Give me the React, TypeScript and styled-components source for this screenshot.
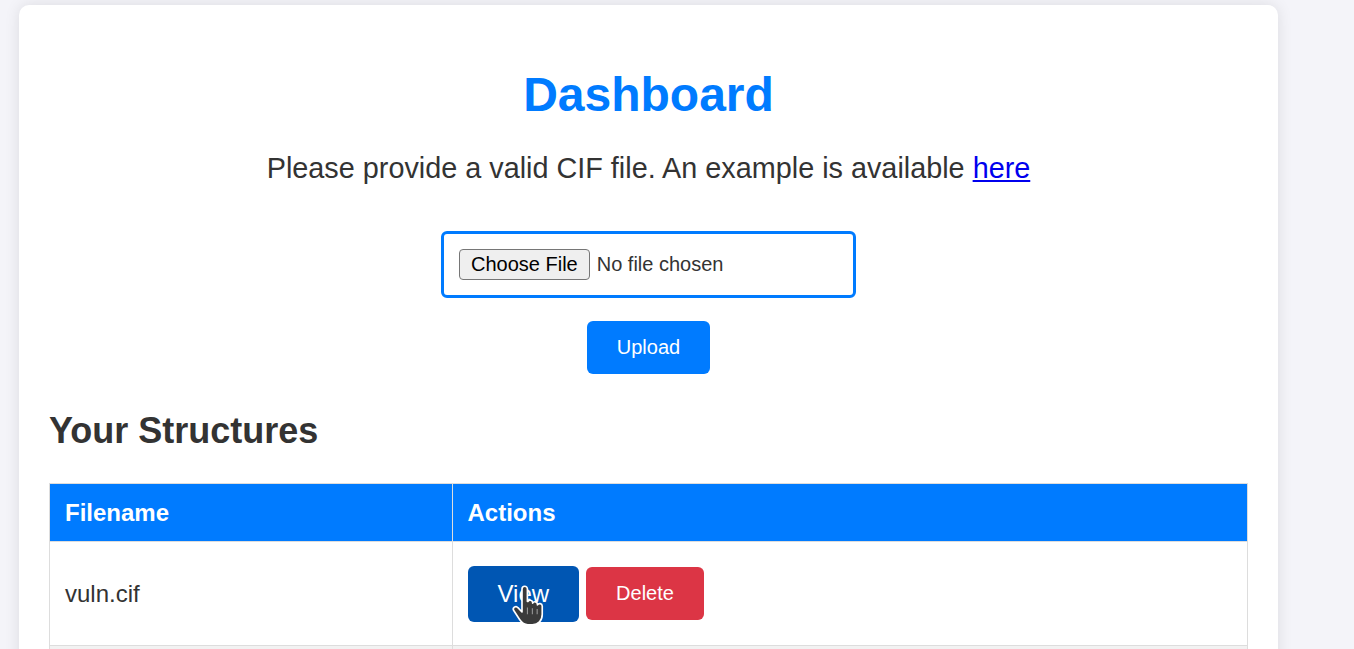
import React from "react";
import styled, { createGlobalStyle } from "styled-components";

const GlobalStyle = createGlobalStyle`
  html, body {
    margin: 0;
    padding: 0;
    background: #f4f4f9;
    font-family: "Liberation Sans", Arial, sans-serif;
    color: #333;
    overflow: hidden;
  }
`;

const Page = styled.div`
  padding: 5px 0 0 19px;
  min-height: 649px;
  box-sizing: border-box;
`;

const Card = styled.main`
  width: 1259px;
  box-sizing: border-box;
  padding: 30px;
  background: #fff;
  border-radius: 10px;
  box-shadow: 0 0 15px rgba(0, 0, 0, 0.1);
  min-height: 700px;
`;

const Title = styled.h1`
  margin: 32px 0 30px;
  text-align: center;
  color: #007bff;
  font-size: 48px;
  font-weight: 700;
  line-height: 55px;
`;

const Intro = styled.p`
  margin: 0;
  text-align: center;
  font-size: 28.8px;
  line-height: 33px;
  color: #333;
`;

const Link = styled.a`
  color: #0000ee;
  text-decoration: underline;
`;

const UploadForm = styled.form`
  display: flex;
  flex-direction: column;
  align-items: center;
  gap: 23px;
  margin: 46px 0 0;
`;

const FileInput = styled.input`
  width: 415px;
  box-sizing: border-box;
  padding: 15px;
  border: 3px solid #007bff;
  border-radius: 6px;
  font-family: "Liberation Sans", Arial, sans-serif;
  font-size: 20px;
  color: #333;
  background: #fff;

  &::file-selector-button {
    font-family: "Liberation Sans", Arial, sans-serif;
    font-size: 20px;
    color: #000;
    background: #efefef;
    border: 1px solid #767676;
    border-radius: 4px;
    padding: 3px 11px;
    margin-right: 7px;
  }
`;

const Button = styled.button<{ $variant: "primary" | "danger" | "hover" }>`
  display: inline-block;
  border: none;
  border-radius: 6px;
  padding: 15px 30px;
  font-family: "Liberation Sans", Arial, sans-serif;
  font-size: ${(p) => (p.$variant === "hover" ? "24px" : "20px")};
  line-height: ${(p) => (p.$variant === "hover" ? "26px" : "23px")};
  color: #fff;
  cursor: pointer;
  background: ${(p) =>
    p.$variant === "danger" ? "#dc3545" : p.$variant === "hover" ? "#0056b3" : "#007bff"};
`;

const SectionTitle = styled.h2`
  margin: 36px 0 32px;
  font-size: 36px;
  line-height: 41px;
  font-weight: 700;
  color: #333;
`;

const Table = styled.table`
  width: 100%;
  table-layout: fixed;
  border-collapse: collapse;
  font-size: 24px;
`;

const HeadCell = styled.th<{ $first?: boolean }>`
  width: ${(p) => (p.$first ? "33.6%" : "auto")};
  padding: 15px;
  height: 58px;
  box-sizing: border-box;
  text-align: left;
  font-weight: 700;
  color: #fff;
  background: #007bff;
  border: 1px solid #ddd;
  line-height: 27px;
`;

const Row = styled.tr<{ $striped?: boolean }>`
  background: ${(p) => (p.$striped ? "#f2f2f2" : "#fff")};
`;

const Cell = styled.td`
  padding: 15px;
  height: 104px;
  box-sizing: border-box;
  border: 1px solid #ddd;
  color: #333;
  line-height: 27px;
`;

const Actions = styled.div`
  display: flex;
  align-items: center;
  gap: 7px;
`;

const HoverWrap = styled.span`
  position: relative;
  display: inline-flex;
`;

const Cursor = styled.svg`
  position: absolute;
  left: 43px;
  top: 19px;
  width: 34px;
  height: 42px;
  pointer-events: none;
`;

const HandCursor = () => (
  <Cursor viewBox="0 0 22 28">
    <path
      d="M7 2.6a1.8 1.8 0 0 1 3.6 0V11h0.3a1.7 1.7 0 0 1 3.2 0.7v0.4a1.7 1.7 0 0 1 3.2 0.7v0.5a1.7 1.7 0 0 1 3.2 0.7V19.5c0 4.2-2.6 7-6.6 7h-3c-2.4 0-3.9-1.1-5.4-3.3L1.6 17.2a1.7 1.7 0 0 1 2.7-2.1L7 18Z"
      fill="#3a3a3a"
      stroke="#fff"
      strokeWidth="1.1"
      strokeLinejoin="round"
    />
    <path d="M10.6 15v4.5M13.9 15.5v4M17.1 16v3.5" stroke="#9a9a9a" strokeWidth="0.7" fill="none" />
  </Cursor>
);

export default function App() {
  return (
    <>
      <GlobalStyle />
      <Page>
        <Card>
          <Title>Dashboard</Title>
          <Intro>
            Please provide a valid CIF file. An example is available <Link href="#">here</Link>
          </Intro>
          <UploadForm onSubmit={(e) => e.preventDefault()}>
            <FileInput type="file" />
            <Button type="submit" $variant="primary">
              Upload
            </Button>
          </UploadForm>
          <SectionTitle>Your Structures</SectionTitle>
          <Table>
            <thead>
              <tr>
                <HeadCell $first>Filename</HeadCell>
                <HeadCell>Actions</HeadCell>
              </tr>
            </thead>
            <tbody>
              <Row>
                <Cell>vuln.cif</Cell>
                <Cell>
                  <Actions>
                    <HoverWrap>
                      <Button type="button" $variant="hover">
                        View
                      </Button>
                      <HandCursor />
                    </HoverWrap>
                    <Button type="button" $variant="danger">
                      Delete
                    </Button>
                  </Actions>
                </Cell>
              </Row>
              <Row $striped>
                <Cell></Cell>
                <Cell></Cell>
              </Row>
            </tbody>
          </Table>
        </Card>
      </Page>
    </>
  );
}
